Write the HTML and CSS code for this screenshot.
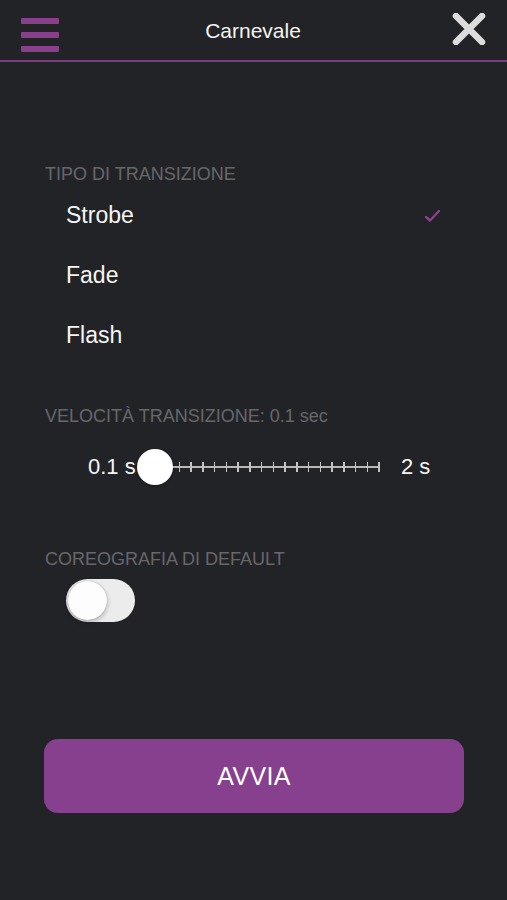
FILE: index.html
```html
<!DOCTYPE html>
<html lang="it">
<head>
<meta charset="utf-8">
<title>Carnevale</title>
<link rel="stylesheet" href="styles.css">
</head>
<body>
<div class="screen">
  <header class="topbar">
    <div class="menu" aria-label="menu">
      <span class="bar"></span><span class="bar"></span><span class="bar"></span>
    </div>
    <h1 class="title">Carnevale</h1>
    <div class="close">
      <svg width="34" height="32" viewBox="0 0 34 32">
        <path d="M4 3 L30 29 M30 3 L4 29" stroke="#dcdcdc" stroke-width="6.5" stroke-linecap="round" fill="none"/>
      </svg>
    </div>
  </header>

  <main class="content">
    <div class="section-label first">TIPO DI TRANSIZIONE</div>
    <ul class="options">
      <li class="option">Strobe
        <svg class="check" width="18" height="16" viewBox="0 0 18 16">
          <path d="M2 10 L6 13.5 L15 4" stroke="#8a418f" stroke-width="2.4" stroke-linecap="round" stroke-linejoin="round" fill="none"/>
        </svg>
      </li>
      <li class="option">Fade</li>
      <li class="option">Flash</li>
    </ul>

    <div class="section-label speed">VELOCITÀ TRANSIZIONE: 0.1 sec</div>
    <div class="slider-row">
      <span class="s-min">0.1 s</span>
      <div class="slider">
        <div class="track"></div>
        <div class="ticks">
          <i></i><i></i><i></i><i></i><i></i><i></i><i></i><i></i><i></i><i></i>
          <i></i><i></i><i></i><i></i><i></i><i></i><i></i><i></i><i></i><i></i>
        </div>
        <div class="thumb"></div>
      </div>
      <span class="s-max">2 s</span>
    </div>

    <div class="section-label coreo">COREOGRAFIA DI DEFAULT</div>
    <div class="toggle"><div class="knob"></div></div>

    <button class="start">AVVIA</button>
  </main>
</div>
</body>
</html>
```

FILE: styles.css
```css
* { box-sizing: border-box; }
html, body { margin: 0; padding: 0; }
body {
  background: #222327;
  font-family: "Liberation Sans", Arial, sans-serif;
  color: #f2f2f2;
  width: 507px;
  height: 900px;
  overflow: hidden;
}
.screen { display: flex; flex-direction: column; }

.topbar {
  height: 62px;
  border-bottom: 2px solid #7d3b82;
  display: grid;
  grid-template-columns: 1fr auto 1fr;
  align-items: start;
  padding: 0 22px 0 21px;
}
.menu {
  display: flex;
  flex-direction: column;
  gap: 8px;
  padding-top: 18px;
}
.bar {
  display: block;
  width: 38px;
  height: 6px;
  background: #8a3f8d;
  border-radius: 1px;
}
.title {
  margin: 0;
  font-weight: normal;
  font-size: 21px;
  line-height: 24px;
  padding-top: 19px;
  color: #f4f4f4;
}
.close {
  justify-self: end;
  padding-top: 13px;
  margin-right: -1px;
}
.close svg { display: block; }

.content { display: flex; flex-direction: column; }

.section-label {
  font-size: 18px;
  line-height: 22px;
  color: #67676b;
  padding-left: 45px;
}
.section-label.first { margin-top: 101px; }
.section-label.speed { margin-top: 40px; }
.section-label.coreo { margin-top: 61px; }

.options { list-style: none; margin: 0; padding: 0; }
.option {
  height: 60px;
  display: flex;
  align-items: center;
  justify-content: space-between;
  padding: 0 66px 0 66px;
  font-size: 23px;
  color: #f5f5f5;
}
.check { margin-right: -1px; }

.slider-row {
  margin-top: 20px;
  height: 40px;
  display: flex;
  align-items: center;
  padding-left: 88px;
  font-size: 22px;
  color: #f5f5f5;
}
.s-min { width: 49px; }
.slider {
  position: relative;
  width: 243px;
  height: 40px;
}
.track {
  position: absolute;
  left: 18px;
  right: 1px;
  top: 19px;
  height: 2px;
  background: #b8b8b8;
}
.ticks {
  position: absolute;
  left: 18px;
  right: 0;
  top: 15px;
  height: 10px;
  display: flex;
  justify-content: space-between;
}
.ticks i {
  display: block;
  width: 1.5px;
  height: 10px;
  background: #c4c4c4;
}
.thumb {
  position: absolute;
  left: 0;
  top: 2px;
  width: 36px;
  height: 36px;
  border-radius: 50%;
  background: #ffffff;
  box-shadow: 0 1px 3px rgba(0,0,0,0.35);
}
.s-max { margin-left: 21px; }

.toggle {
  margin: 9px 0 0 66px;
  width: 69px;
  height: 43px;
  border-radius: 22px;
  background: #ececec;
  padding: 2px;
  display: flex;
  align-items: center;
}
.knob {
  width: 39px;
  height: 39px;
  border-radius: 50%;
  background: #fdfdfd;
  box-shadow: 0 2px 5px rgba(0,0,0,0.28), 0 0 1px rgba(0,0,0,0.3);
}

.start {
  margin: 117px 0 0 44px;
  width: 420px;
  height: 74px;
  border: none;
  border-radius: 14px;
  background: #87408e;
  color: #ffffff;
  font-family: "Liberation Sans", Arial, sans-serif;
  font-size: 25px;
  letter-spacing: 0.3px;
  padding: 0;
}
```
